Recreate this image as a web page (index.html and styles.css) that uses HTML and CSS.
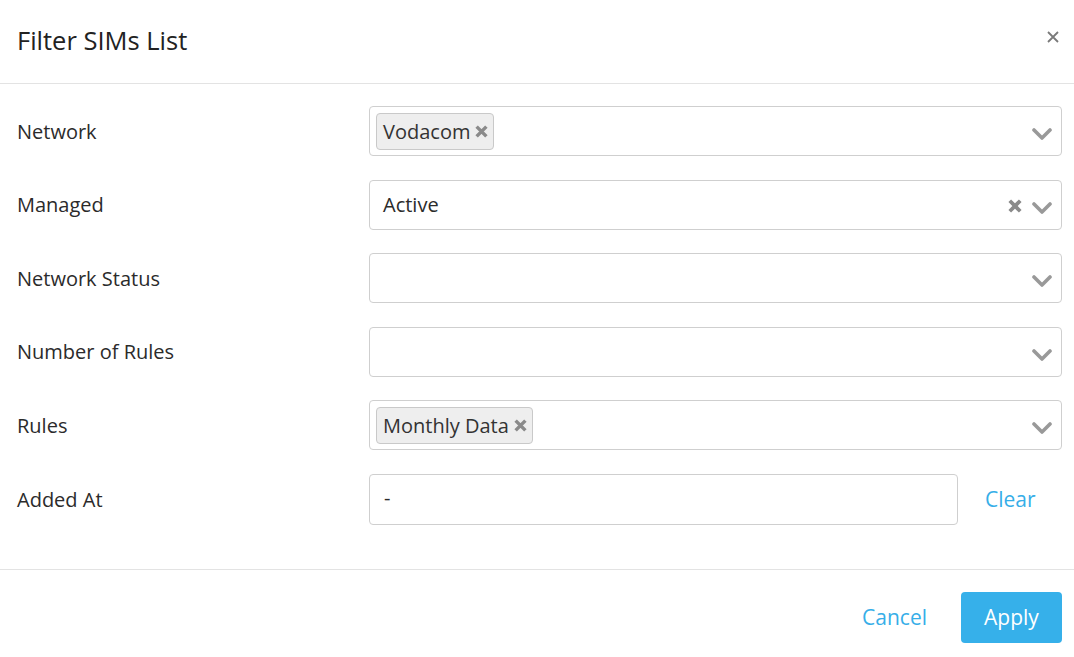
FILE: index.html
```html
<!DOCTYPE html>
<html>
<head>
<meta charset="utf-8">
<link rel="stylesheet" href="styles.css">
</head>
<body>
<div class="modal">
  <div class="modal-header">
    <h1 class="title">Filter SIMs List</h1>
    <svg class="close" viewBox="0 0 12 12"><path d="M1 1 L11 11 M11 1 L1 11" /></svg>
  </div>
  <div class="modal-body">
    <div class="row">
      <label class="label">Network</label>
      <div class="select">
        <div class="values"><span class="tag">Vodacom<svg class="x-icon" viewBox="0 0 12 12"><path d="M1.5 1.5 L10.5 10.5 M10.5 1.5 L1.5 10.5" /></svg></span></div>
        <div class="controls"><svg class="chev" viewBox="0 0 20 14"><path d="M2 3 L10 11 L18 3" /></svg></div>
      </div>
    </div>
    <div class="row">
      <label class="label">Managed</label>
      <div class="select">
        <div class="values"><span class="single">Active</span></div>
        <div class="controls"><svg class="x-icon clear-x" viewBox="0 0 12 12"><path d="M1.5 1.5 L10.5 10.5 M10.5 1.5 L1.5 10.5" /></svg><svg class="chev" viewBox="0 0 20 14"><path d="M2 3 L10 11 L18 3" /></svg></div>
      </div>
    </div>
    <div class="row">
      <label class="label">Network Status</label>
      <div class="select">
        <div class="values"></div>
        <div class="controls"><svg class="chev" viewBox="0 0 20 14"><path d="M2 3 L10 11 L18 3" /></svg></div>
      </div>
    </div>
    <div class="row">
      <label class="label">Number of Rules</label>
      <div class="select">
        <div class="values"></div>
        <div class="controls"><svg class="chev" viewBox="0 0 20 14"><path d="M2 3 L10 11 L18 3" /></svg></div>
      </div>
    </div>
    <div class="row">
      <label class="label">Rules</label>
      <div class="select">
        <div class="values"><span class="tag">Monthly Data<svg class="x-icon" viewBox="0 0 12 12"><path d="M1.5 1.5 L10.5 10.5 M10.5 1.5 L1.5 10.5" /></svg></span></div>
        <div class="controls"><svg class="chev" viewBox="0 0 20 14"><path d="M2 3 L10 11 L18 3" /></svg></div>
      </div>
    </div>
    <div class="row last">
      <label class="label">Added At</label>
      <div class="date-wrap">
        <div class="input">-</div>
        <a class="link clear-link">Clear</a>
      </div>
    </div>
  </div>
  <div class="modal-footer">
    <a class="link cancel">Cancel</a>
    <button class="btn-apply">Apply</button>
  </div>
</div>
</body>
</html>
```
FILE: styles.css
```css
* { box-sizing: border-box; }
html, body { margin: 0; padding: 0; background: #fff; }
body {
  font-family: "Open Sans", "Lato", sans-serif;
  color: #2b2b2b;
  font-size: 20px;
}
.modal { width: 1074px; }
.modal-header {
  height: 84px;
  border-bottom: 1px solid #e3e3e3;
  display: flex;
  align-items: center;
  justify-content: space-between;
  padding: 0 15px 4px 17px;
}
.title {
  margin: 0;
  font-weight: 400;
  font-size: 25.5px;
  color: #222;
}
.close {
  width: 12px;
  height: 12px;
  margin-top: -6px;
}
.close path { stroke: #7a7a7a; stroke-width: 1.8; fill: none; }
.modal-body {
  padding: 22px 12px 44px 17px;
}
.row {
  display: flex;
  align-items: center;
  margin-bottom: 23.6px;
}
.row.last { margin-bottom: 0; }
.label {
  width: 352px;
  flex: none;
  font-size: 20px;
  color: #2b2b2b;
}
.select {
  flex: 1;
  height: 50px;
  border: 1px solid #cfcfcf;
  border-radius: 4px;
  display: flex;
  align-items: center;
  padding: 0 9px 0 6px;
}
.values { flex: 1; display: flex; align-items: center; }
.tag {
  display: inline-flex;
  align-items: center;
  height: 37px;
  padding: 0 5px 0 6px;
  background: #eeeeee;
  border: 1px solid #c9c9c9;
  border-radius: 4px;
  font-size: 20px;
  color: #333;
}
.x-icon { width: 13px; height: 13px; margin-left: 5px; margin-top: 1px; }
.x-icon path { stroke: #8a8a8a; stroke-width: 3.2; fill: none; stroke-linecap: butt; }
.single { padding-left: 7px; }
.controls { display: flex; align-items: center; gap: 10px; }
.clear-x { margin: 3px 0 0 0; width: 14px; height: 14px; }
.chev { width: 20px; height: 14px; margin-top: 6px; }
.chev path { fill: none; stroke: #999; stroke-width: 3.6; stroke-linecap: round; stroke-linejoin: round; }
.date-wrap { flex: 1; display: flex; align-items: center; }
.input {
  width: 589px;
  height: 51px;
  border: 1px solid #cfcfcf;
  border-radius: 4px;
  display: flex;
  align-items: center;
  padding-left: 14px;
  padding-bottom: 4px;
}
.link { color: #36aee8; font-size: 21px; cursor: pointer; }
.clear-link { margin-left: 27px; }
.modal-footer {
  border-top: 1px solid #e3e3e3;
  display: flex;
  justify-content: flex-end;
  align-items: center;
  padding: 22px 12px 14px 0;
  gap: 34px;
}
.btn-apply {
  width: 101px;
  height: 51px;
  background: #36b0ea;
  color: #fff;
  border: none;
  border-radius: 4px;
  font-family: inherit;
  font-size: 21px;
}
```
